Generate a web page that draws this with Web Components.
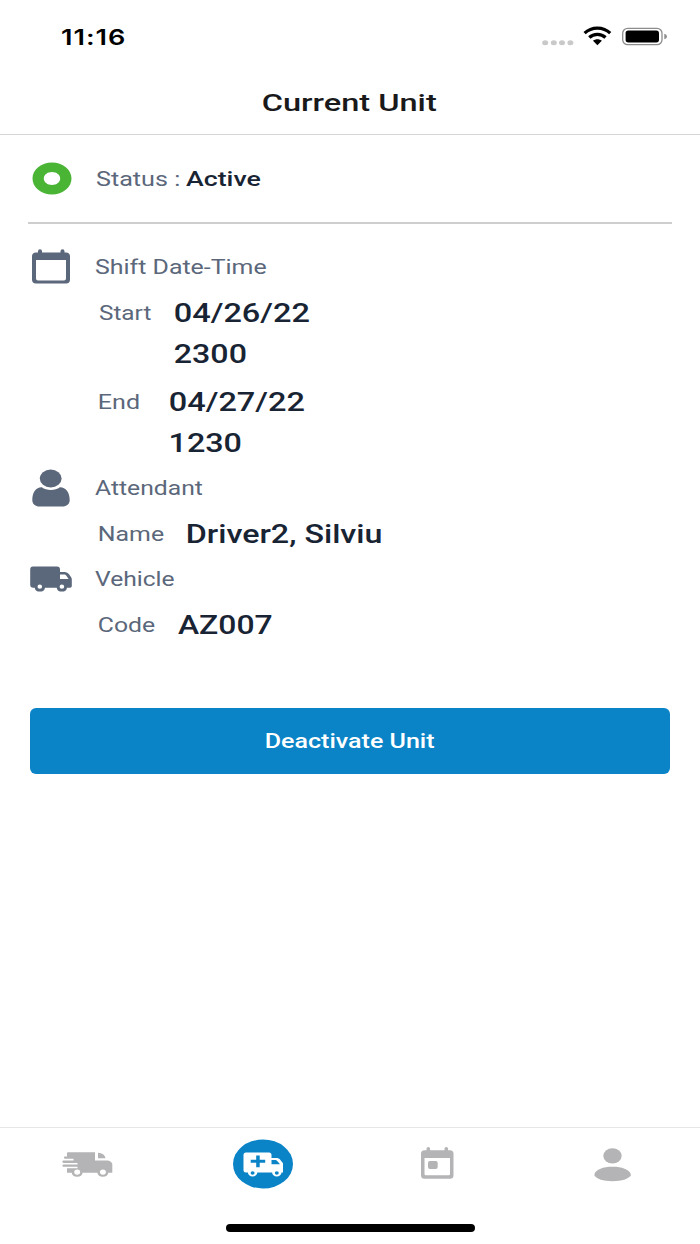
<!DOCTYPE html>
<html lang="en">
<head>
<meta charset="utf-8">
<title>Current Unit</title>
<style>
  body { margin: 0; background: #fff; }
</style>
</head>
<body>
<unit-app></unit-app>

<script>
// Text stretched so that its ink fills exactly `width` pixels
class FitText extends HTMLElement {
  constructor() {
    super();
    this.attachShadow({ mode: 'open' });
  }

  connectedCallback() {
    const width = Number(this.getAttribute('width'));
    const size = this.getAttribute('size') || '21';
    const weight = this.getAttribute('weight') || '400';
    const family = this.getAttribute('family') || 'Roboto';
    const spacing = this.getAttribute('spacing') || '0';
    const ctx = document.createElement('canvas').getContext('2d');
    ctx.font = `${weight} ${size}px ${family}`;
    ctx.letterSpacing = `${spacing}px`;
    const ink = ctx.measureText(this.textContent);
    const scale = width / (ink.actualBoundingBoxLeft + ink.actualBoundingBoxRight);

    this.shadowRoot.innerHTML = `
      <style>
        :host { display: block; flex: none; width: ${width}px; }
        span {
          display: block;
          width: max-content;
          white-space: nowrap;
          font: ${weight} ${size}px/var(--line, 41px) ${family}, sans-serif;
          letter-spacing: ${spacing}px;
          transform-origin: 0 50%;
          transform: translate(${ink.actualBoundingBoxLeft * scale}px, 1px) scaleX(${scale});
        }
      </style>
      <span><slot></slot></span>
    `;
  }
}
customElements.define('fit-text', FitText);

const ICONS = {
  active: `<svg width="40" height="33" viewBox="0 0 40 33">
    <path fill="#4ab435" fill-rule="evenodd" d="M20 .5C9.200 .5.500 7.600.500 16.500S9.200 32.500 20 32.500 39.500 25.400 39.500 16.500 30.800.500 20 .500ZM20 10c4.600 0 8.200 2.900 8.200 6.500S24.600 23 20 23s-8.200-2.900-8.200-6.500S15.400 10 20 10Z"/></svg>`,
  calendar: `<svg width="38" height="35" viewBox="0 0 38 35">
    <path fill="currentColor" fill-rule="evenodd" d="M6 3.500V2.300a2 2 0 0 1 4 0v1.200h18.500V2.300a2 2 0 0 1 4 0v1.200h1.500a4 4 0 0 1 4 4v23a4 4 0 0 1-4 4H4a4 4 0 0 1-4-4v-23a4 4 0 0 1 4-4ZM4 11V29.500a2 2 0 0 0 2 2h26a2 2 0 0 0 2-2V11Z"/></svg>`,
  person: `<svg width="38" height="38" viewBox="0 0 38 38">
    <ellipse cx="18.700" cy="9.500" rx="10.900" ry="9" fill="currentColor"/>
    <path fill="currentColor" d="M9.800 18.200C14.500 21.800 23.200 21.800 27.900 18.200C33.500 18 37.700 23 37.700 31C37.700 35.200 34.500 37.500 30.500 37.500H7.500C3.500 37.500.300 35.200 .300 31C.300 23 4.200 18 9.800 18.200Z"/></svg>`,
  truck: `<svg width="42" height="26" viewBox="0 0 42 26">
    <path fill="currentColor" fill-rule="evenodd" d="M3 .500H27a3 3 0 0 1 3 3V6h4.500c2 0 3.500 1 4.700 2.600l1.600 2.200c.700 1 1 1.600 1 2.700V20a1.700 1.700 0 0 1-1.700 1.700H37a5.200 4.500 0 0 1-10.300 0H15a5.200 4.500 0 0 1-10.300 0H3.200a3 3 0 0 1-3-3V3.500a3 3 0 0 1 2.800-3ZM30 8.500V13h8.600l-2.200-3.200c-.700-.900-1.300-1.300-2.400-1.300ZM9.800 18.600a2.300 2.100 0 1 0 0 4.200 2.300 2.100 0 0 0 0-4.200ZM31.900 18.600a2.300 2.100 0 1 0 0 4.200 2.300 2.100 0 0 0 0-4.200Z"/></svg>`,
  fast: `<svg width="51" height="26" viewBox="0 0 51 26">
    <path fill="currentColor" fill-rule="evenodd" d="M6 .300H33V8.500H45.500Q47 8.500 48 9.300L49.500 10.500Q50.300 11.200 50.300 12.500V20.800H46.300a5.500 4.700 0 0 1-10.900 0H20.600a5.500 4.700 0 0 1-10.900 0H5V16.300H15.500V14.800H1.500a1 1 0 0 1 0-2.200H15.500V10.900H1.500a1 1 0 0 1 0-2.300H11.500V6.700H3a1 1 0 0 1 0-2.300H5V1.300Q5 .300 6 .300ZM15.200 17.500a3 2.600 0 1 0 0 5.200 3 2.600 0 0 0 0-5.200ZM40.900 17.500a3 2.600 0 1 0 0 5.200 3 2.600 0 0 0 0-5.200ZM36 .800C40 1 43 3 43.500 6.300H36Z"/></svg>`,
  ambulance: `<svg width="60" height="50" viewBox="0 0 60 50">
    <ellipse cx="30" cy="25" rx="30" ry="24.500" fill="#0a84c7"/>
    <path fill="#fff" fill-rule="evenodd" d="M13 13.500H36a2.500 2.500 0 0 1 2.500 2.500v3h5c1.500 0 2.500.500 3.500 1.500l3 3.700V33.500h-1.500a4.700 4 0 0 1-9.400 0H24.300a4.700 4 0 0 1-9.400 0H13A2.500 2.500 0 0 1 10.500 31V16a2.500 2.500 0 0 1 2.500-2.500ZM23.200 16.500V20.800H17.700V23.800H23.200V28.300H26.700V23.800H32.200V20.800H26.700V16.500ZM38.500 21V25.300H47l-3-3.600c-.500-.500-.900-.700-1.500-.700ZM19.600 32.200a2 1.800 0 1 0 0 3.600 2 1.800 0 0 0 0-3.600ZM43.800 32.200a2 1.800 0 1 0 0 3.600 2 1.800 0 0 0 0-3.600Z"/></svg>`,
  event: `<svg width="33" height="32" viewBox="0 0 33 32">
    <path fill="currentColor" fill-rule="evenodd" d="M5.500 3.200V1.700a1.800 1.800 0 0 1 3.600 0v1.500h14.400V1.700a1.800 1.800 0 0 1 3.600 0v1.500H29a3.500 3.500 0 0 1 3.500 3.500v21.600a3.500 3.500 0 0 1-3.500 3.500H3.500A3.500 3.500 0 0 1 0 28.300V6.700a3.500 3.500 0 0 1 3.500-3.500ZM3.500 11V27a1.300 1.300 0 0 0 1.300 1.300h23A1.300 1.300 0 0 0 29 27V11ZM9 14h5.700a2 2 0 0 1 2 2v4a2 2 0 0 1-2 2H9a2 2 0 0 1-2-2v-4a2 2 0 0 1 2-2Z"/></svg>`,
  profile: `<svg width="37" height="34" viewBox="0 0 37 34">
    <ellipse cx="18.500" cy="7.800" rx="9.200" ry="7.600" fill="currentColor"/>
    <path fill="currentColor" d="M.500 26C2 21.500 9 18.800 18.500 18.800S35 21.500 36.700 26v1.500C34.500 31 28 33.200 18.500 33.200S2.500 31 .500 27.500Z"/></svg>`,
  // signal dots, wifi and battery share one drawing
  system: `<svg width="128" height="24" viewBox="0 0 128 24">
    <g fill="#c9c9c9"><ellipse cx="5.200" cy="18.700" rx="3" ry="2.500"/><ellipse cx="13.800" cy="18.700" rx="3" ry="2.500"/><ellipse cx="22" cy="18.700" rx="3" ry="2.500"/><ellipse cx="30.400" cy="18.700" rx="3" ry="2.500"/></g>
    <g fill="none" stroke="#000" stroke-width="3.200"><path d="M44.600 9.200C51.500 2.400 63.300 2.400 70.200 9.200"/><path d="M49.300 13.500C53.700 9.200 61.100 9.200 65.500 13.500"/></g>
    <path d="M53 16.800C55.500 14.800 59.300 14.800 61.800 16.800L57.400 21.200Z"/>
    <rect x="82.700" y="4.300" width="39.300" height="16.400" rx="5" fill="#fff" stroke="#8c8c8c" stroke-width="1.300"/>
    <rect x="85.600" y="6.600" width="33.400" height="11.900" rx="2.700"/>
    <path fill="#8c8c8c" d="M124.300 9.700Q127 10.500 127 12.500T124.300 15.300Z"/></svg>`
};

class UnitIcon extends HTMLElement {
  connectedCallback() {
    this.attachShadow({ mode: 'open' }).innerHTML = `
      <style>
        :host { display: flex; justify-content: center; align-items: center; flex: none; }
        svg { display: block; overflow: visible; }
      </style>
      ${ICONS[this.getAttribute('name')]}
    `;
  }
}
customElements.define('unit-icon', UnitIcon);

// Icon and heading, with the detail rows slotted underneath
class UnitSection extends HTMLElement {
  connectedCallback() {
    this.attachShadow({ mode: 'open' }).innerHTML = `
      <style>
        :host { display: block; color: #5b677a; }
        .head { display: flex; align-items: center; height: 41px; }
        unit-icon { width: 45px; margin-right: 21.500px; }
        .rows { display: flex; flex-direction: column; gap: 7px; padding: 5px 0 4px 71px; }
      </style>
      <div class="head">
        <unit-icon name="${this.getAttribute('icon')}"></unit-icon>
        <fit-text width="${this.getAttribute('width')}">${this.getAttribute('heading')}</fit-text>
      </div>
      <div class="rows"><slot></slot></div>
    `;
  }
}
customElements.define('unit-section', UnitSection);

class DetailRow extends HTMLElement {
  connectedCallback() {
    this.attachShadow({ mode: 'open' }).innerHTML = `
      <style>
        :host { display: flex; align-items: flex-start; }
        .value { color: #182433; margin-left: var(--gap, 23px); }
      </style>
      <slot name="label"></slot>
      <div class="value"><slot></slot></div>
    `;
  }
}
customElements.define('detail-row', DetailRow);

class TabBar extends HTMLElement {
  connectedCallback() {
    const tabs = ['fast', 'ambulance', 'event', 'profile'];
    this.attachShadow({ mode: 'open' }).innerHTML = `
      <style>
        :host { display: block; height: 116px; border-top: 1px solid #e6e6e6; }
        nav { display: flex; height: 71px; padding-left: 1px; color: #b4b4b6; }
        unit-icon { width: 174.800px; }
        unit-icon[name="event"] { padding-bottom: 1px; box-sizing: border-box; }
        unit-icon[name="fast"], unit-icon[name="profile"] { padding-top: 3px; box-sizing: border-box; }
        unit-icon[name="fast"] { padding-top: 2px; padding-right: 1px; }
        .home { width: 249px; height: 7.500px; margin: 25px auto 0; border-radius: 4px; background: #000; }
      </style>
      <nav>${tabs.map((tab) => `<unit-icon name="${tab}"></unit-icon>`).join('')}</nav>
      <div class="home"></div>
    `;
  }
}
customElements.define('tab-bar', TabBar);

class UnitApp extends HTMLElement {
  connectedCallback() {
    this.attachShadow({ mode: 'open' }).innerHTML = `
      <style>
        :host { display: flex; flex-direction: column; width: 700px; height: 1244px; background: #fff; }
        .system { display: flex; justify-content: space-between; align-items: center; height: 73px; padding: 0 32px 0 61px; box-sizing: border-box; color: #000; }
        .system unit-icon { padding-bottom: 2px; }
        header { display: flex; justify-content: center; height: 61px; border-bottom: 1px solid #d6d6d6; color: #19191b; --line: 58px; }
        main { flex: 1; padding: 0 28px; }
        .status { display: flex; align-items: center; height: 87px; border-bottom: 2px solid #cecece; color: #5b677a; }
        .status unit-icon { width: 47px; margin-right: 21px; }
        .status .active { color: #182433; margin-left: 6.500px; }
        .sections { padding-top: 22px; }
        button { display: flex; justify-content: center; align-items: center; width: 640px; height: 66px; margin: 59px 2px 0; padding: 0 0 1px; box-sizing: border-box; border: 0; border-radius: 6px; background: #0a84c7; color: #fff; --line: 39px; }
      </style>
      <div class="system">
        <fit-text width="63.500" size="21.500" weight="600" family="Inter" spacing="0.8">11:16</fit-text>
        <unit-icon name="system"></unit-icon>
      </div>
      <header><fit-text width="173.500" size="24.500" weight="500">Current Unit</fit-text></header>
      <main>
        <div class="status">
          <unit-icon name="active"></unit-icon>
          <fit-text width="83">Status :</fit-text>
          <fit-text class="active" width="74.500" weight="500">Active</fit-text>
        </div>
        <div class="sections">
          <unit-section icon="calendar" heading="Shift Date-Time" width="171.500">
            <detail-row>
              <fit-text slot="label" width="52.500">Start</fit-text>
              <fit-text width="134" size="26" weight="500">04/26/22</fit-text>
              <fit-text width="71" size="26" weight="500">2300</fit-text>
            </detail-row>
            <detail-row style="--gap: 30.500px">
              <fit-text slot="label" width="40">End</fit-text>
              <fit-text width="134" size="26" weight="500">04/27/22</fit-text>
              <fit-text width="70" size="26" weight="500" style="margin-left: 1.500px">1230</fit-text>
            </detail-row>
          </unit-section>
          <unit-section icon="person" heading="Attendant" width="108">
            <detail-row>
              <fit-text slot="label" width="65">Name</fit-text>
              <fit-text width="194" size="25.500" weight="500">Driver2, Silviu</fit-text>
            </detail-row>
          </unit-section>
          <unit-section icon="truck" heading="Vehicle" width="79.500">
            <detail-row>
              <fit-text slot="label" width="56">Code</fit-text>
              <fit-text width="94" size="25.500" weight="500">AZ007</fit-text>
            </detail-row>
          </unit-section>
        </div>
        <button><fit-text width="169" size="20" weight="500">Deactivate Unit</fit-text></button>
      </main>
      <tab-bar></tab-bar>
    `;
  }
}
customElements.define('unit-app', UnitApp);
</script>
</body>
</html>
